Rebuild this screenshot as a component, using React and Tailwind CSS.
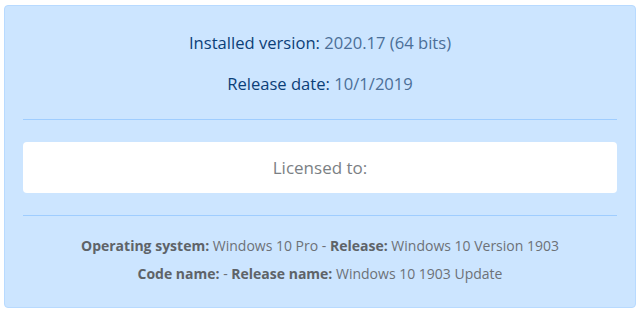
import React from 'react';

const font = { fontFamily: '"Open Sans", "Noto Sans", sans-serif' };

export default function App() {
    return (
        <div className="w-[640px] h-[313px] bg-white pt-[5px] px-[4px]" style={font}>
            <div className="h-[303px] border border-[#b8daff] bg-[#cce5ff] rounded-[4px] px-[18px] pt-[25px]">
                {/* Version info */}
                <p className="text-center text-[16.6px] leading-[24px] text-[#0b3f78]">
                    Installed version: <span className="text-[#4b6f98]">2020.17 (64 bits)</span>
                </p>
                <p className="mt-[17px] text-center text-[16.6px] leading-[24px] text-[#0b3f78]">
                    Release date: <span className="text-[#4b6f98]">10/1/2019</span>
                </p>

                <div className="mt-[23px] h-px bg-[#9fcdff]" />

                {/* License */}
                <div className="mt-[22px] h-[51px] bg-white rounded-[4px] flex items-center justify-center">
                    <span className="text-[17px] text-[#7b7f84]">Licensed to:</span>
                </div>

                <div className="mt-[22px] h-px bg-[#9fcdff]" />

                {/* System */}
                <div className="mt-[16px] text-center text-[14px] leading-[28px] text-[#6c7177]">
                    <p>
                        <b className="text-[#5e6368]">Operating system:</b> Windows 10 Pro - <b className="text-[#5e6368]">Release:</b> Windows 10 Version 1903
                    </p>
                    <p>
                        <b className="text-[#5e6368]">Code name:</b> - <b className="text-[#5e6368]">Release name:</b> Windows 10 1903 Update
                    </p>
                </div>
            </div>
        </div>
    );
}
